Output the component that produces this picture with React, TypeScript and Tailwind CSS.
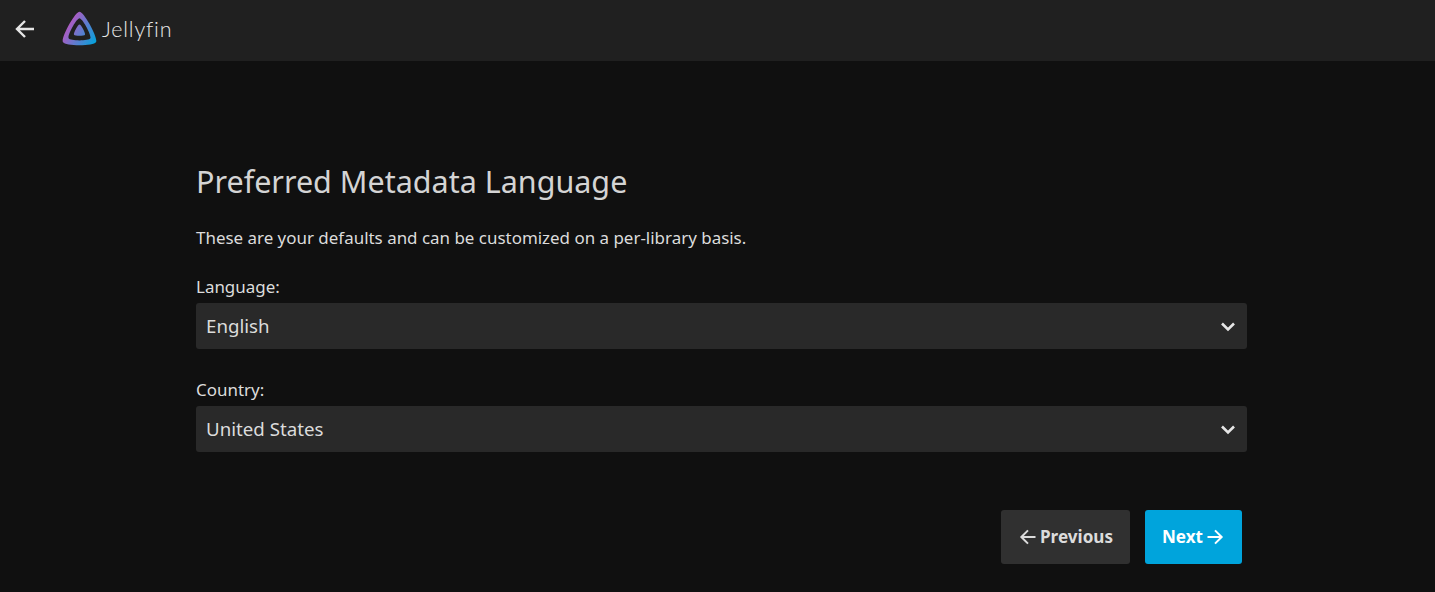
import React from "react";

const Chevron = () => (
  <svg width="24" height="24" viewBox="0 0 24 24" fill="none" stroke="#e6e6e6" strokeWidth="2.6" className="shrink-0">
    <path d="M6 9.5 L12 15.5 L18 9.5" />
  </svg>
);

const Arrow = ({ dir, size = 20, sw = 2 }: { dir: "left" | "right"; size?: number; sw?: number }) => (
  <svg width={size} height={size} viewBox="0 0 24 24" fill="none" stroke="currentColor" strokeWidth={sw} className="shrink-0">
    {dir === "left" ? <path d="M21 12H4M12 4l-8 8 8 8" /> : <path d="M3 12h17M12 4l8 8-8 8" />}
  </svg>
);

const Logo = () => (
  <svg width="37" height="37" viewBox="0 0 512 512" className="shrink-0">
    <defs>
      <linearGradient id="jf" gradientUnits="userSpaceOnUse" x1="110.25" y1="213.3" x2="496.14" y2="436.09">
        <stop offset="0" stopColor="#aa5cc3" />
        <stop offset="1" stopColor="#00a4dc" />
      </linearGradient>
    </defs>
    <path fill="url(#jf)" d="M256 201.6c-20.4 0-86.2 119.3-76.2 139.4s142.5 19.9 152.4 0S276.5 201.6 256 201.6z" />
    <path fill="url(#jf)" d="M256 23.3c-61.6 0-259.8 359.4-229.6 420.1s429.3 60 459.2 0S317.6 23.3 256 23.3zM406.5 390.8c-19.6 39.3-281.1 39.8-300.9 0s110.1-275.3 150.4-275.3S426.1 351.4 406.5 390.8z" />
  </svg>
);

const Field = ({ label, value }: { label: string; value: string }) => (
  <div className="flex flex-col">
    <label className="text-[16.96px] leading-[22px] text-[#dcdcdc] mb-[5px]">{label}</label>
    <div className="h-[45.5px] rounded-[3px] bg-[#292929] flex items-center justify-between pl-[10px] pr-[7px] text-[18.7px] text-[#dcdcdc]">
      <span className="pt-[1px]">{value}</span>
      <Chevron />
    </div>
  </div>
);

export default function App() {
  return (
    <div className="w-[1435px] h-[592px] overflow-hidden bg-[#101010] font-['Noto_Sans',sans-serif] flex flex-col">
      <header className="h-[61px] bg-[#202020] flex items-center pl-[13px] pb-[4px] shrink-0">
        <span className="text-[#e6e6e6]"><Arrow dir="left" size={24} sw={2.4} /></span>
        <div className="ml-[24px] flex items-center">
          <Logo />
          <span className="ml-[4px] mt-[2px] font-['Lato',sans-serif] font-light text-[21.5px] tracking-[0.8px] text-[#e8e8e8]">Jellyfin</span>
        </div>
      </header>
      <main className="flex-1 pl-[196px] pr-[188px] pt-[98px]">
        <h1 className="text-[30.5px] leading-[44px] text-[#d4d4d4] font-normal">Preferred Metadata Language</h1>
        <p className="mt-[24px] text-[16.96px] leading-[22px] text-[#dcdcdc]">These are your defaults and can be customized on a per-library basis.</p>
        <div className="mt-[27px] flex flex-col gap-[30.5px]">
          <Field label="Language:" value="English" />
          <Field label="Country:" value="United States" />
        </div>
        <div className="mt-[58.5px] flex justify-end gap-[15px] pr-[5px]">
          <button className="h-[54px] w-[129px] rounded-[3px] bg-[#303030] text-[#dcdcdc] font-bold text-[17.1px] flex items-center justify-center gap-[2px]">
            <Arrow dir="left" sw={2.4} />
            Previous
          </button>
          <button className="h-[54px] w-[97px] rounded-[3px] bg-[#00a4dc] text-white font-bold text-[17.1px] flex items-center justify-center gap-[2px]">
            Next
            <Arrow dir="right" sw={2.4} />
          </button>
        </div>
      </main>
    </div>
  );
}
